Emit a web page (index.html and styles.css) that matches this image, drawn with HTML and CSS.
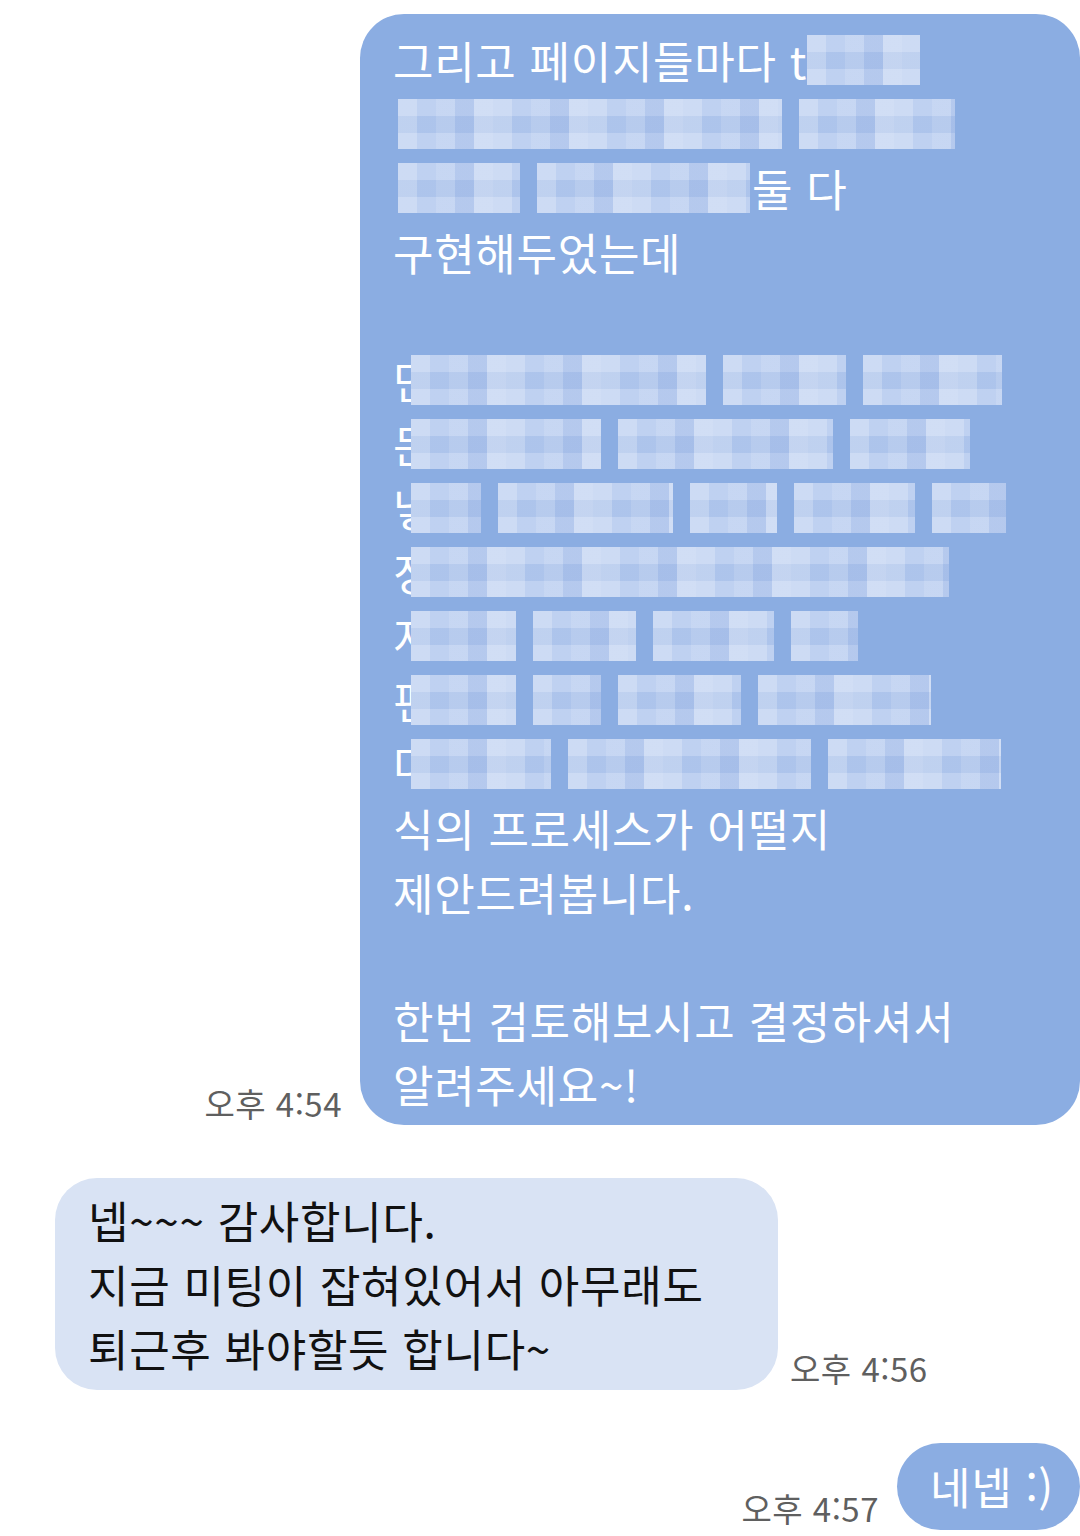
FILE: index.html
```html
<!DOCTYPE html>
<html lang="ko">
<head>
<meta charset="utf-8">
<link rel="stylesheet" href="styles.css">
</head>
<body>
<main class="chat">
  <div class="row row-out">
    <span class="time">오후 4:54</span>
    <div class="bubble bubble-out big">
      <div class="line">그리고 페이지들마다 t<span class="blur" style="width:113px"></span></div>
      <div class="line inset"><span class="blur" style="width:384px"></span><span class="blur gap" style="width:156px"></span></div>
      <div class="line inset"><span class="blur" style="width:122px"></span><span class="blur gap" style="width:213px"></span><span class="after">둘 다</span></div>
      <div class="line">구현해두었는데</div>
      <div class="line"></div>
      <div class="line">단<span class="blur first" style="width:295px"></span><span class="blur gap" style="width:123px"></span><span class="blur gap" style="width:139px"></span></div>
      <div class="line">둔<span class="blur first" style="width:190px"></span><span class="blur gap" style="width:215px"></span><span class="blur gap" style="width:120px"></span></div>
      <div class="line">낳<span class="blur first" style="width:70px"></span><span class="blur gap" style="width:175px"></span><span class="blur gap" style="width:87px"></span><span class="blur gap" style="width:121px"></span><span class="blur gap" style="width:74px"></span></div>
      <div class="line">정<span class="blur first" style="width:538px"></span></div>
      <div class="line">저<span class="blur first" style="width:105px"></span><span class="blur gap" style="width:103px"></span><span class="blur gap" style="width:121px"></span><span class="blur gap" style="width:67px"></span></div>
      <div class="line">편<span class="blur first" style="width:105px"></span><span class="blur gap" style="width:68px"></span><span class="blur gap" style="width:123px"></span><span class="blur gap" style="width:173px"></span></div>
      <div class="line">다<span class="blur first" style="width:140px"></span><span class="blur gap" style="width:243px"></span><span class="blur gap" style="width:173px"></span></div>
      <div class="line">식의 프로세스가 어떨지</div>
      <div class="line">제안드려봅니다.</div>
      <div class="line"></div>
      <div class="line">한번 검토해보시고 결정하셔서</div>
      <div class="line">알려주세요~!</div>
    </div>
  </div>

  <div class="row row-in">
    <div class="bubble bubble-in">
      <div class="line">넵~~~ 감사합니다.</div>
      <div class="line">지금 미팅이 잡혀있어서 아무래도</div>
      <div class="line">퇴근후 봐야할듯 합니다~</div>
    </div>
    <span class="time">오후 4:56</span>
  </div>

  <div class="row row-out">
    <span class="time">오후 4:57</span>
    <div class="bubble bubble-out small">
      <div class="line">네넵 :)</div>
    </div>
  </div>
</main>
</body>
</html>
```

FILE: styles.css
```css
html, body {
  margin: 0;
  padding: 0;
  background: #ffffff;
}

.chat {
  width: 1080px;
  height: 1536px;
  overflow: hidden;
  padding-top: 14px;
  box-sizing: border-box;
  display: flex;
  flex-direction: column;
  gap: 53px;
  font-family: "Noto Sans CJK KR", "Noto Sans", sans-serif;
}

.row {
  display: flex;
  align-items: flex-end;
}

.row-out {
  justify-content: flex-end;
  gap: 18px;
}

.row-in {
  justify-content: flex-start;
  padding-left: 55px;
  gap: 12px;
}

.time {
  font-size: 33px;
  color: #5f5f5f;
  line-height: 40px;
  letter-spacing: 0.5px;
  white-space: nowrap;
  margin-bottom: 2px;
}

.bubble {
  box-sizing: border-box;
  border-radius: 42px;
  font-size: 44px;
  letter-spacing: 0.7px;
}

.bubble-out {
  background: #8badE2;
  color: #ffffff;
}

.bubble-in {
  background: #d9e3f4;
  color: #111111;
  width: 723px;
  padding: 10px 20px 10px 33px;
}

.big {
  width: 720px;
  padding: 14px 20px 9px 33px;
  border-radius: 44px;
}

.small {
  width: 183px;
  height: 87px;
  padding: 11px 0 0 33px;
  border-radius: 44px;
}

.line {
  height: 64px;
  line-height: 64px;
  white-space: nowrap;
  display: flex;
  align-items: center;
}

.inset {
  padding-left: 5px;
}

.blur {
  display: inline-block;
  height: 50px;
  flex: none;
  background-color: #b6cbef;
  background-image:
    repeating-linear-gradient(90deg,
      rgba(255,255,255,0.22) 0 19px,
      rgba(255,255,255,0) 19px 38px,
      rgba(255,255,255,0.12) 38px 57px,
      rgba(130,160,220,0.16) 57px 76px,
      rgba(255,255,255,0.28) 76px 95px),
    repeating-linear-gradient(180deg,
      rgba(255,255,255,0.12) 0 17px,
      rgba(120,155,215,0.14) 17px 34px);
}

.first {
  margin-left: -23px;
}

.gap {
  margin-left: 17px;
}

.after {
  margin-left: 2px;
}
```
